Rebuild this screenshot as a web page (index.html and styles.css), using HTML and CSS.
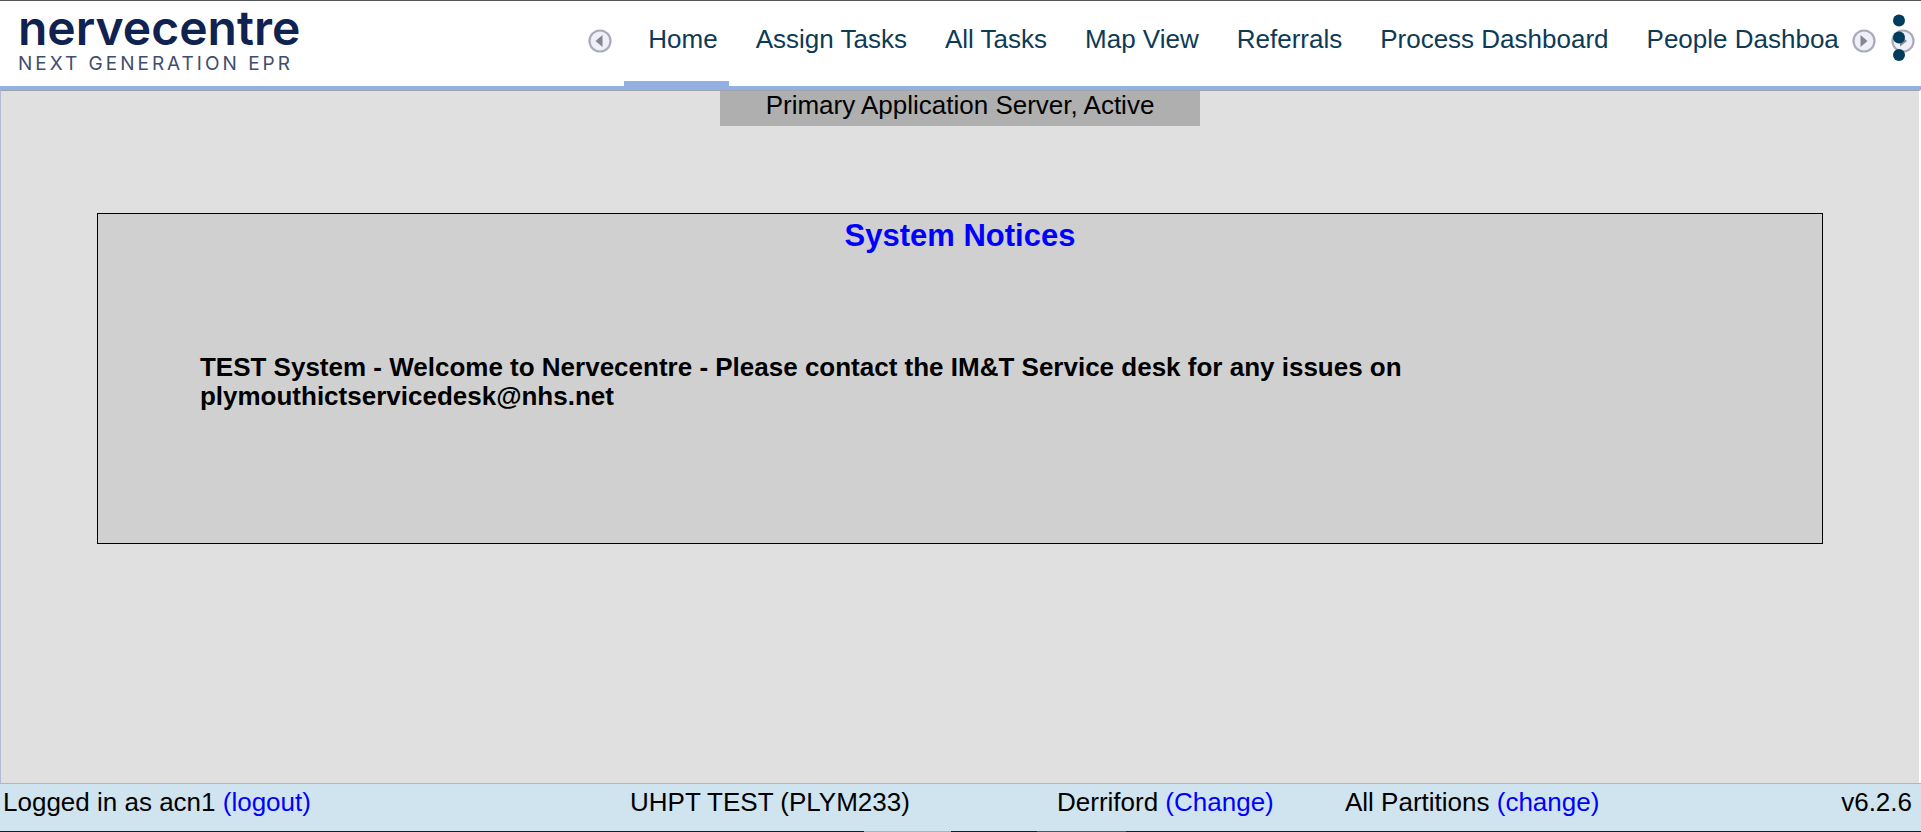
FILE: index.html
```
<!DOCTYPE html>
<html lang="en">
<head>
<meta charset="utf-8">
<title>Nervecentre</title>
<link rel="stylesheet" href="styles.css">
</head>
<body>
<header class="header">
  <div class="logo">
    <span class="logo-name">nervecentre</span>
    <span class="logo-tag">NEXT GENERATION EPR</span>
  </div>
  <button class="scroll" aria-label="Scroll left">
    <svg class="arrow" viewBox="0 0 24 24"><circle cx="12" cy="12" r="10.5" fill="#eeeff8" stroke="#a9abbb" stroke-width="2.2"/><path d="M14.5 6v12L7.5 12z" fill="#85858d"/></svg>
  </button>
  <nav class="nav">
    <a class="tab tab-active" href="#">Home</a>
    <a class="tab" href="#">Assign Tasks</a>
    <a class="tab" href="#">All Tasks</a>
    <a class="tab" href="#">Map View</a>
    <a class="tab" href="#">Referrals</a>
    <a class="tab" href="#">Process Dashboard</a>
    <a class="tab" href="#">People Dashboard</a>
  </nav>
  <div class="tools">
    <button class="scroll" aria-label="Scroll right">
      <svg class="arrow" viewBox="0 0 24 24"><circle cx="12" cy="12" r="10.5" fill="#eeeff8" stroke="#a9abbb" stroke-width="2.2"/><path d="M8.5 6v12L15.500 12z" fill="#85858d"/></svg>
    </button>
    <button class="more" aria-label="More">
      <svg class="more-icon" viewBox="0 0 26 48"><circle cx="14" cy="27" r="10.5" fill="#eeeff8" stroke="#a9abbb" stroke-width="2.2"/><path d="M11 21.5v11l7-5.5z" fill="#85858d"/><g fill="#003d5c"><circle cx="10" cy="6.5" r="6"/><circle cx="10" cy="23.5" r="6"/><circle cx="10" cy="41" r="6"/></g></svg>
    </button>
  </div>
</header>
<main class="main">
  <div class="status">Primary Application Server, Active</div>
  <section class="notices">
    <h1 class="notices-title">System Notices</h1>
    <p class="notices-text">TEST System - Welcome to Nervecentre - Please contact the IM&amp;T Service desk for any issues on plymouthictservicedesk@nhs.net</p>
  </section>
</main>
<footer class="footer">
  <span>Logged in as acn1 <a class="link" href="#">(logout)</a></span>
  <span>UHPT TEST (PLYM233)</span>
  <span>Derriford <a class="link" href="#">(Change)</a></span>
  <span>All Partitions <a class="link" href="#">(change)</a></span>
  <span class="version">v6.2.6</span>
</footer>
<div class="edge"></div>
</body>
</html>
```
FILE: styles.css
```
* {
  box-sizing: border-box;
}

body {
  margin: 0;
  min-height: 100vh;
  display: flex;
  flex-direction: column;
  background: #fff;
  color: #000;
  font: 26px/29px "Liberation Sans", Arial, sans-serif;
}

.header {
  display: grid;
  grid-template-columns: 30% 48px minmax(0, 1fr) 81px;
  border-top: 1px solid #55555a;
  border-bottom: 4px solid #92b0e2;
  background: #fff;
}

.logo {
  display: flex;
  flex-direction: column;
  padding: 2px 0 0 18px;
  white-space: nowrap;
}

.logo-name {
  font: 600 48px/50px Inter, sans-serif;
  color: #0f2250;
}

.logo-tag {
  font: 400 19px/22px Inter, sans-serif;
  letter-spacing: 3px;
  color: #3f4d6e;
}

.scroll,
.more {
  display: flex;
  align-items: flex-start;
  padding: 28px 0 0 12px;
  border: 0;
  background: none;
}

.arrow {
  width: 24px;
  height: 24px;
}

.nav {
  display: flex;
  gap: 3px;
  overflow: hidden;
}

.tab {
  flex: none;
  padding: 24px 11px 27px 24px;
  border-bottom: 5px solid transparent;
  color: #0d3a55;
  text-decoration: none;
  white-space: nowrap;
}

.tab-active {
  border-bottom-color: #92b0e2;
}

.tools {
  display: flex;
}

.more {
  padding: 13px 0 0 13px;
}

.more-icon {
  width: 26px;
  height: 48px;
}

.main {
  flex: 1;
  display: flex;
  flex-direction: column;
  align-items: center;
  border: solid;
  border-width: 1px 2px 0 1px;
  border-color: #a0a4ae #fff #fff #b4bad2;
  background: #e0e0e0;
}

.status {
  width: 25%;
  min-width: max-content;
  padding-bottom: 6px;
  background: #afafaf;
  text-align: center;
}

.notices {
  width: 90%;
  margin: 87px 0;
  padding: 4px 102px 132px;
  border: 1px solid #000;
  background: #d0d0d0;
  font-weight: 700;
}

.notices-title {
  margin: 0 0 99px;
  font-size: 31px;
  line-height: 36px;
  text-align: center;
  color: #00f;
}

.notices-text {
  margin: 0;
}

.footer {
  display: grid;
  grid-template-columns: 627fr 427fr 288fr 490fr 77fr;
  padding: 4px 9px 14px 3px;
  border-top: 1px solid #a9b6cf;
  background: #d0e4ef;
  white-space: nowrap;
}

.version {
  text-align: right;
}

.link {
  color: #00f;
  text-decoration: none;
}

.edge {
  height: 1px;
  background: linear-gradient(to right, #1c1a20 45%, #d9a787 45% 49.5%, #1c1a20 49.5% 54%, #55565c 54% 58.6%, #1c1a20 58.6%);
}
```
